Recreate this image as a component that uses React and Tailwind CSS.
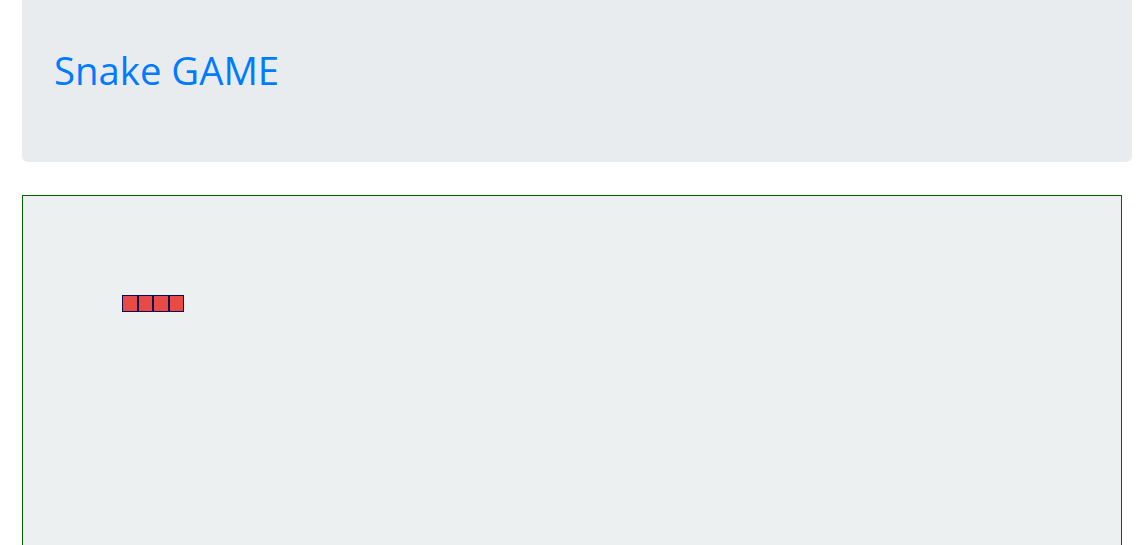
export default function App() {
    const cells = [0, 1, 2, 3];

    return (
        <div className="min-h-screen bg-white" style={{ fontFamily: '"Open Sans", "Noto Sans", sans-serif' }}>
            {/* Header */}
            <div className="ml-[22px] mr-[12px] h-[162px] rounded-b-md bg-[#e9ecef] pl-[32px] pt-[44px]">
                <h1 className="text-[38.3px] leading-[52px] font-normal text-[#007bff]">Snake GAME</h1>
            </div>

            {/* Board */}
            <div className="ml-[22px] mr-[22px] mt-[33px] h-[500px] border border-[#006400] bg-[#ecf0f1] pl-[99px] pt-[99px]">
                <div className="flex">
                    {cells.map(i => (
                        <div
                            key={i}
                            className="h-[17px] w-[15.5px] border-[1.5px] border-[#0c0c55] bg-[#e84a45]"
                        />
                    ))}
                </div>
            </div>
        </div>
    );
}
